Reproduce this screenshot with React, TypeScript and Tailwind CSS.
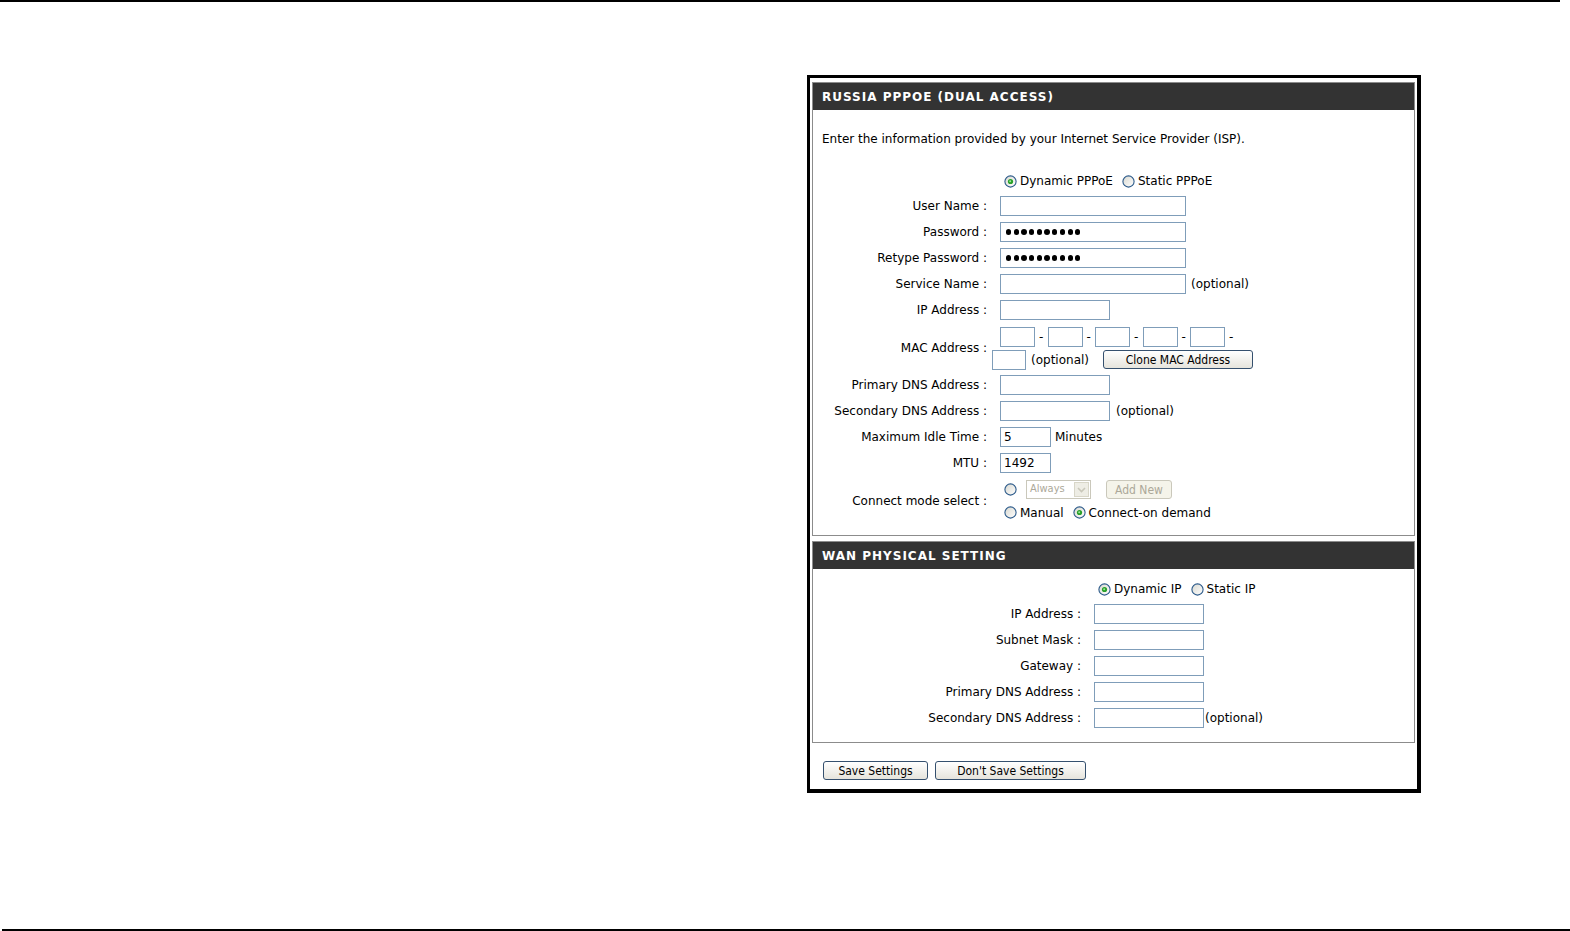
import React from 'react'

function Radio({ checked = false }: { checked?: boolean }) {
  return (
    <svg width="13" height="13" viewBox="0 0 13 13" className="shrink-0">
      <defs>
        <linearGradient id="rfill" x1="0" y1="0" x2="1" y2="1">
          <stop offset="0" stopColor="#d8d8d0" />
          <stop offset="1" stopColor="#ffffff" />
        </linearGradient>
      </defs>
      <circle cx="6.5" cy="6.5" r="5.6" fill="url(#rfill)" stroke="#2c5a8a" strokeWidth="1.1" />
      {checked && (
        <>
          <circle cx="6.5" cy="6.5" r="2.6" fill="#28a028" />
          <circle cx="6.2" cy="6.2" r="1" fill="#9ce89c" />
        </>
      )}
    </svg>
  )
}

function Box({ w, children }: { w: string; children?: React.ReactNode }) {
  return (
    <div className={`${w} h-[20px] shrink-0 border border-[#7f9db9] bg-white flex items-center px-[3px] text-[12px]`}>
      {children}
    </div>
  )
}

function Dots() {
  return (
    <div className="flex gap-[2.4px] pl-[2px]">
      {Array.from({ length: 10 }).map((_, i) => (
        <span key={i} className="w-[5.3px] h-[5.3px] rounded-full bg-black" />
      ))}
    </div>
  )
}

function Btn({ w, children, disabled = false }: { w: string; children: React.ReactNode; disabled?: boolean }) {
  return (
    <div
      className={
        disabled
          ? `${w} h-[19px] shrink-0 rounded-[3px] border border-[#cac8bb] bg-[#f5f4ea] text-[#aca899] flex items-center justify-center text-[12px] [font-family:'DejaVu_Sans_Condensed','DejaVu_Sans',sans-serif]`
          : `${w} h-[19px] shrink-0 rounded-[3px] border border-[#35506e] bg-gradient-to-b from-white to-[#e6e4dc] text-black flex items-center justify-center text-[12px] [font-family:'DejaVu_Sans_Condensed','DejaVu_Sans',sans-serif]`
      }
    >
      {children}
    </div>
  )
}

function Row({
  label,
  labelW,
  h = 'h-[26px]',
  children,
}: {
  label?: string
  labelW: string
  h?: string
  children?: React.ReactNode
}) {
  return (
    <div className={`flex items-center ${h}`}>
      <div className={`${labelW} shrink-0 text-right whitespace-pre`}>{label}</div>
      <div className="ml-[13px] flex items-center">{children}</div>
    </div>
  )
}

function Header({ title }: { title: string }) {
  return (
    <div className="h-[27px] bg-[#333333] text-white font-bold text-[12px] pl-[9px] flex items-center tracking-[1px]">
      {title}
    </div>
  )
}

const L1 = 'w-[174px]'
const L2 = 'w-[268px]'

function Sep() {
  return <span className="w-[12.5px] shrink-0 text-center">-</span>
}

export default function App() {
  return (
    <div className="w-[1570px] h-[931px] bg-white flex flex-col text-black text-[12px] [font-family:'DejaVu_Sans','Noto_Sans',sans-serif]">
      <div className="h-[2px] w-[1560px] bg-black shrink-0" />

      <div className="ml-[807px] mt-[73px] w-[614px] border-l-[3px] border-t-[3px] border-r-4 border-b-4 border-black pt-[4px] px-[2px] pb-[9px]">
        {/* RUSSIA PPPOE */}
        <div className="border border-[#8c8c8c]">
          <Header title="RUSSIA PPPOE (DUAL ACCESS)" />
          <div className="pt-[21px] pb-[9px]">
            <div className="pl-[9px] h-[16px] leading-[16px]">
              Enter the information provided by your Internet Service Provider (ISP).
            </div>
            <div className="mt-[22px]">
              <Row labelW={L1} h="h-[24px]">
                <span className="ml-[4px]"><Radio checked /></span>
                <span className="ml-[3px]">Dynamic PPPoE</span>
                <span className="ml-[9px]"><Radio /></span>
                <span className="ml-[3px]">Static PPPoE</span>
              </Row>
            </div>
            <Row label="User Name :" labelW={L1}>
              <Box w="w-[186px]" />
            </Row>
            <Row label="Password :" labelW={L1}>
              <Box w="w-[186px]"><Dots /></Box>
            </Row>
            <Row label="Retype Password :" labelW={L1}>
              <Box w="w-[186px]"><Dots /></Box>
            </Row>
            <Row label="Service Name :" labelW={L1}>
              <Box w="w-[186px]" />
              <span className="ml-[5px]">(optional)</span>
            </Row>
            <Row label="IP Address :" labelW={L1}>
              <Box w="w-[110px]" />
            </Row>
            <Row label="MAC Address :" labelW={L1} h="h-[49px]">
              <div className="flex flex-col gap-[3px] pt-[1px]">
                <div className="flex items-center">
                  <Box w="w-[35px]" />
                  <Sep />
                  <Box w="w-[35px]" />
                  <Sep />
                  <Box w="w-[35px]" />
                  <Sep />
                  <Box w="w-[35px]" />
                  <Sep />
                  <Box w="w-[35px]" />
                  <Sep />
                </div>
                <div className="flex items-center -ml-[8px]">
                  <Box w="w-[34px]" />
                  <span className="ml-[5px] w-[58px] shrink-0">(optional)</span>
                  <span className="ml-[14px]">
                    <Btn w="w-[150px]">Clone MAC Address</Btn>
                  </span>
                </div>
              </div>
            </Row>
            <Row label="Primary DNS Address :" labelW={L1}>
              <Box w="w-[110px]" />
            </Row>
            <Row label="Secondary DNS Address :" labelW={L1}>
              <Box w="w-[110px]" />
              <span className="ml-[6px]">(optional)</span>
            </Row>
            <Row label="Maximum Idle Time :" labelW={L1}>
              <Box w="w-[51px]">5</Box>
              <span className="ml-[4px]">Minutes</span>
            </Row>
            <Row label="MTU :" labelW={L1}>
              <Box w="w-[51px]">1492</Box>
            </Row>
            <Row label="Connect mode select :" labelW={L1} h="h-[50px]">
              <div className="flex flex-col gap-[1px]">
                <div className="h-[22px] flex items-center">
                  <span className="ml-[4px]"><Radio /></span>
                  <div className="ml-[9px] w-[65px] h-[19px] border border-[#cac8bb] bg-white flex items-center justify-between text-[#aca899] text-[11px] [font-family:'DejaVu_Sans_Condensed','DejaVu_Sans',sans-serif]">
                    <span className="pl-[3px]">Always</span>
                    <span className="w-[15px] h-[15px] mr-[1px] bg-[#eeede5] border border-[#d8d6c8] flex items-center justify-center">
                      <svg width="9" height="6" viewBox="0 0 9 6">
                        <path d="M1 1 L4.5 4.5 L8 1" fill="none" stroke="#c9c7ba" strokeWidth="1.6" />
                      </svg>
                    </span>
                  </div>
                  <span className="ml-[15px]">
                    <Btn w="w-[66px]" disabled>Add New</Btn>
                  </span>
                </div>
                <div className="h-[22px] flex items-center">
                  <span className="ml-[4px]"><Radio /></span>
                  <span className="ml-[3px]">Manual</span>
                  <span className="ml-[9px]"><Radio checked /></span>
                  <span className="ml-[3px]">Connect-on demand</span>
                </div>
              </div>
            </Row>
          </div>
        </div>

        {/* WAN PHYSICAL SETTING */}
        <div className="mt-[5px] border border-[#8c8c8c]">
          <Header title="WAN PHYSICAL SETTING" />
          <div className="pt-[8px] pb-[11px]">
            <Row labelW={L2} h="h-[24px]">
              <span className="ml-[4px]"><Radio checked /></span>
              <span className="ml-[3px]">Dynamic IP</span>
              <span className="ml-[9px]"><Radio /></span>
              <span className="ml-[3px]">Static IP</span>
            </Row>
            <Row label="IP Address :" labelW={L2}>
              <Box w="w-[110px]" />
            </Row>
            <Row label="Subnet Mask :" labelW={L2}>
              <Box w="w-[110px]" />
            </Row>
            <Row label="Gateway :" labelW={L2}>
              <Box w="w-[110px]" />
            </Row>
            <Row label="Primary DNS Address :" labelW={L2}>
              <Box w="w-[110px]" />
            </Row>
            <Row label="Secondary DNS Address :" labelW={L2}>
              <Box w="w-[110px]" />
              <span className="ml-[1px]">(optional)</span>
            </Row>
          </div>
        </div>

        <div className="mt-[18px] ml-[11px] flex gap-[7px]">
          <Btn w="w-[105px]">Save Settings</Btn>
          <Btn w="w-[151px]">Don&apos;t Save Settings</Btn>
        </div>
      </div>

      <div className="mt-auto ml-[2px] h-[2px] bg-black shrink-0" />
    </div>
  )
}
